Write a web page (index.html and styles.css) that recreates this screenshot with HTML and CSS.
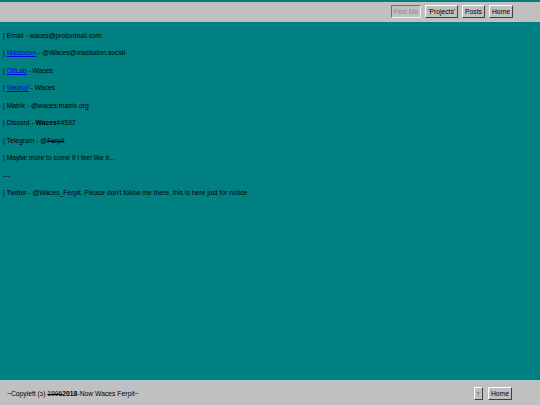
FILE: index.html
```html
<!DOCTYPE html>
<html>
<head>
<meta charset="utf-8">
<link rel="stylesheet" href="styles.css">
</head>
<body>
<div class="page">
  <header class="topbar">
    <nav class="nav">
      <span class="btn btn-current">Find Me</span>
      <span class="btn">'Projects'</span>
      <span class="btn">Posts</span>
      <span class="btn">Home</span>
    </nav>
  </header>
  <main class="content">
    <p class="line">| Email - waces@protonmail.com</p>
    <p class="line">| <a class="link" href="#">Mastodon</a> - @Waces@mastodon.social</p>
    <p class="line">| <a class="link" href="#">GitLab</a> - Waces</p>
    <p class="line">| <a class="link" href="#">Weasyl</a> - Waces</p>
    <p class="line">| Matrix - @waces:matrix.org</p>
    <p class="line">| Discord - <b>Waces</b>#4537</p>
    <p class="line">| Telegram - @<s>Ferpit</s></p>
    <p class="line">| Maybe more to come if I feel like it...</p>
    <p class="line">---</p>
    <p class="line">| Twitter - @Waces_Ferpit. Please don't follow me there, this is here just for notice</p>
  </main>
  <footer class="footbar">
    <span class="copy">~Copyleft (ɔ) <s>1996</s><b>2018</b>-Now Waces Ferpit~</span>
    <nav class="nav foot-nav">
      <span class="btn btn-up">↑</span>
      <span class="btn">Home</span>
    </nav>
  </footer>
</div>
</body>
</html>
```
FILE: styles.css
```css
html, body {
  margin: 0;
  padding: 0;
}
body {
  background: #008080;
  font-family: "Liberation Sans", Arial, sans-serif;
  font-size: 6.75px;
  color: #000;
}
.page {
  min-height: 405px;
  display: flex;
  flex-direction: column;
}
.topbar {
  margin-top: 2px;
  height: 19px;
  background: #c0c0c0;
  border-bottom: 1px solid #a8cccc;
  display: flex;
  align-items: center;
  justify-content: flex-end;
  padding-right: 27px;
}
.nav {
  display: flex;
  align-items: center;
  gap: 4px;
}
.btn {
  display: inline-block;
  height: 11px;
  line-height: 11px;
  padding: 0 2px;
  background: #c0c0c0;
  border: 1px solid;
  border-color: #ffffff #404040 #404040 #ffffff;
  color: #000;
  white-space: nowrap;
}
.btn-current {
  border-color: #707070 #f0f0f0 #f0f0f0 #707070;
  color: #8a8a8a;
}
.content {
  flex: 1;
  padding: 4.5px 3px 0 3px;
}
.line {
  margin: 0;
  line-height: 17.55px;
  white-space: nowrap;
}
.link {
  color: #0000ee;
  text-decoration: underline;
}
.footbar {
  height: 24px;
  background: #c0c0c0;
  border-top: 1px solid #a8cccc;
  display: flex;
  align-items: center;
  justify-content: space-between;
  padding: 0 28px 0 7px;
}
.foot-nav {
  gap: 5px;
}
.btn-up {
  padding: 0 2px;
}
```
